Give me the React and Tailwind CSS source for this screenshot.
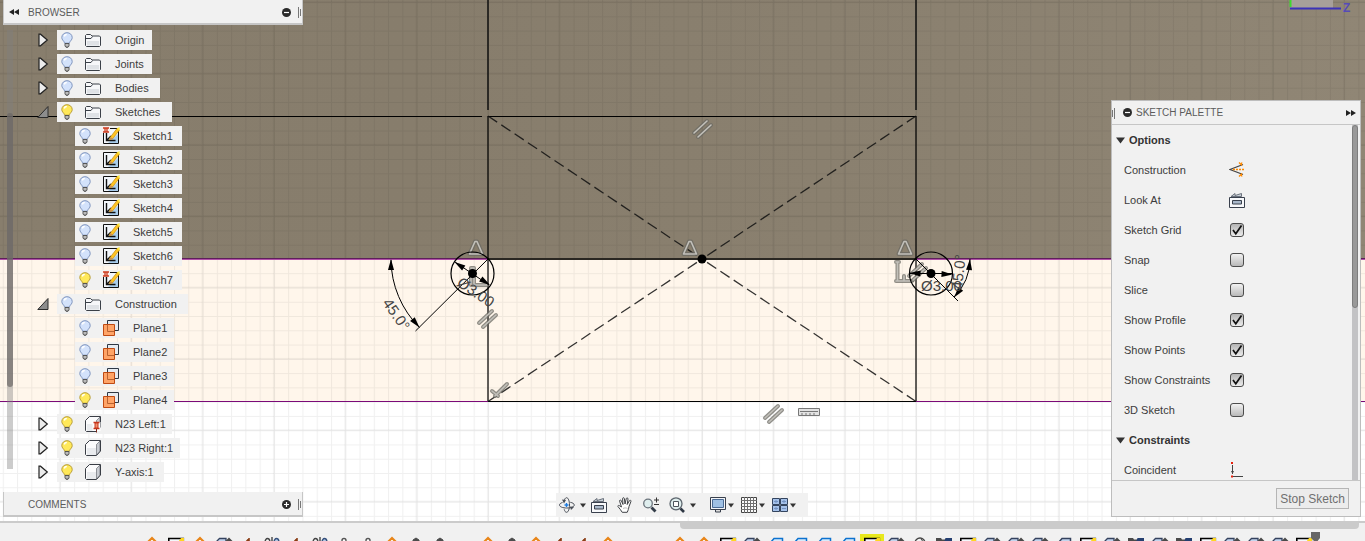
import React from "react";

/* ---------- small icons ---------- */

function Bulb({ on }) {
  return (
    <svg width="12" height="16" viewBox="0 0 12 16" className="shrink-0" aria-hidden="true">
      <path
        d="M6 .7C3.100.7.8 2.800.8 5.500c0 2 1.400 3 2.200 4.200.3.6.5 1 .5 1.500h5c0-.5.2-.9.5-1.500.8-1.200 2.200-2.200 2.200-4.200C11.200 2.800 8.900.7 6 .7z"
        fill={on ? "#ffe95a" : "#d3e2fb"}
        stroke={on ? "#b89c35" : "#7d93bd"}
      />
      <path d="M3.300 4.500c.3-1.200 1.300-1.900 2.500-1.900" fill="none" stroke="#fff" strokeWidth="1.500" />
      <path d="M4 11.500h4v2.500l-1 1.300H5L4 14z" fill="#9a9a9a" stroke="#4d4d4d" strokeWidth=".9" />
      <path d="M4.500 13h3" stroke="#eee" strokeWidth=".8" />
    </svg>
  );
}

function Folder() {
  return (
    <svg width="16" height="16" viewBox="0 0 16 16" className="shrink-0" aria-hidden="true">
      <path d="M.5 13.500v-10l1-1h4l1.500 1.500h7.500l1 1v8.500l-1 1h-13z" fill="#f6f7f9" stroke="#3b4048" />
      <path d="M.5 6.500h5.500l1.500-2" fill="none" stroke="#3b4048" />
      <path d="M2 9h12v4.500H2z" fill="#dfe2e6" />
    </svg>
  );
}

function SketchIcon({ pinned }) {
  return (
    <svg width="18" height="18" viewBox="0 0 18 18" className="shrink-0" aria-hidden="true">
      <path d="M1.500 1.500h15v15h-15z" fill="#f3f7fb" stroke="#111" />
      <path d="M6 16h10V7z" fill="#a9cdec" />
      <path d="M4.500 4v9.500h9M4.500 13.500l4.500-4.500" fill="none" stroke="#111" strokeWidth="1.400" />
      <path d="M8 10.500 15 1.500 17.500 3 10.500 12l-3 .8z" fill="#ffc524" stroke="#b67d00" strokeWidth=".6" />
      <path d="M14.800 1.500 17.500 0v4z" fill="#ffe83b" />
      <path d="m8.500 10 2.300 1.800-3.300 1z" fill="#c98d5a" />
      {pinned && (
        <g>
          <path d="M0 0h8v6H0z" fill="#fbeeea" />
          <path d="M1 1h6M1 5h6M3 1.500v3M5 1.500v3" stroke="#cc3b1e" strokeWidth="1.300" />
        </g>
      )}
    </svg>
  );
}

function PlaneIcon() {
  return (
    <svg width="18" height="18" viewBox="0 0 18 18" className="shrink-0" aria-hidden="true">
      <path d="M5.500 1.500h11v10h-11z" fill="#e6ebf1" stroke="#2f3844" />
      <path d="M1.500 5.500h11v11h-11z" fill="#ffa467" stroke="#bf4a12" />
      <path d="M5.500 6v6.500h6.500" fill="none" stroke="#b96230" />
    </svg>
  );
}

function BodyIcon({ pinned }) {
  return (
    <svg width="18" height="18" viewBox="0 0 18 18" className="shrink-0" aria-hidden="true">
      <path d="m1.500 5.500 4-4h11v10.500l-4 4.500h-10l-1-1z" fill="#fbfbfc" stroke="#3a3e46" />
      <path d="m12.500 5.500 3.500-3.500V12l-3.500 4z" fill="#c9ccd2" stroke="#3a3e46" strokeWidth=".5" />
      <path d="M3 9h9v7H3z" fill="#e9ebee" />
      {pinned && (
        <g>
          <path d="M8.500 7h8v9h-8z" fill="#fff" />
          <path d="M9.500 7.500h6M9.500 13.500h6" stroke="#c5351c" strokeWidth="1.400" />
          <path d="M11 8h3v5h-3z" fill="#f0906f" stroke="#c5351c" />
          <path d="M12.500 14v3.500" stroke="#7c2a1a" />
        </g>
      )}
    </svg>
  );
}

function Twisty({ open }) {
  return (
    <svg width="12" height="14" viewBox="0 0 12 14" aria-hidden="true">
      {open ? (
        <path d="M11 1.500V12.500H.8z" fill="#8d8d8d" stroke="#2c2c2c" />
      ) : (
        <path d="M2 1.200h1.500l6.800 5.800-6.800 5.800H2z" fill="#ececec" stroke="#222" strokeWidth="1.200" />
      )}
    </svg>
  );
}

function DoubleChevron({ right }) {
  return (
    <svg width="12" height="8" viewBox="0 0 12 8" aria-hidden="true">
      <path d={right ? "M1 1v6l5-3zM6 1v6l5-3z" : "M6 1v6L1 4zM11 1v6L6 4z"} fill="#222" />
    </svg>
  );
}

function RoundSign({ plus }) {
  return (
    <svg width="9" height="9" viewBox="0 0 9 9" aria-hidden="true">
      <circle cx="4.500" cy="4.500" r="4.500" fill="#2b2b2b" />
      <path d={plus ? "M2 4.500h5M4.500 2v5" : "M2 4.500h5"} stroke="#fff" strokeWidth="1.200" />
    </svg>
  );
}

function Grip({ flip }) {
  return (
    <svg width="4" height="12" viewBox="0 0 4 12" aria-hidden="true">
      <path d={flip ? "M.5 3v7M2.500 1v11" : "M.5 1v11M2.500 3v7"} stroke="#777" />
    </svg>
  );
}

function LookAtIcon() {
  return (
    <svg width="16" height="16" viewBox="0 0 16 16" aria-hidden="true">
      <path d="M.5 5.500h15v10H.5z" fill="#f8f9fb" stroke="#39404d" />
      <path d="M3.500 8.500h9v3.500h-9z" fill="#a9b8ca" stroke="#39404d" />
      <path d="M2 4.500 6 1.500V3.500L12.500 1.500V4.500z" fill="#c9d0d8" stroke="#5d6570" strokeWidth=".9" />
    </svg>
  );
}

function ConstructionIcon() {
  return (
    <svg width="16" height="16" viewBox="0 0 16 16" aria-hidden="true">
      <path d="M14 2.500 1 7.500l13 5" fill="none" stroke="#444" strokeWidth="1.300" />
      <path d="M4 7.500h12" stroke="#ff8a00" strokeWidth="1.400" strokeDasharray="2 1" />
      <path d="m10 .5 3 3M13 .5l-1 2M10 14.500l3-3M13 14.500l-1-2" fill="none" stroke="#ff8a00" strokeWidth="1.300" />
    </svg>
  );
}

function CoincidentIcon() {
  return (
    <svg width="16" height="16" viewBox="0 0 16 16" aria-hidden="true">
      <path d="M3.500 3v9M3 14.500h11" stroke="#444" />
      <path d="m2 9 1.500 3L5 9z" fill="#444" />
      <path d="M2 0h2v2H2zM2 13.500h2v2H2z" fill="#e8200c" />
    </svg>
  );
}

function OrbitIcon() {
  return (
    <svg width="16" height="16" viewBox="0 0 16 16" aria-hidden="true">
      <g fill="none" stroke="#4a4f58">
        <path d="M5 4.500C5.500 2 6.500.7 7.500.7c1.800 0 3 3.300 3 7.300s-1.200 7.300-3 7.300c-1 0-1.800-1-2.300-3" />
        <path d="M3.500 5.500C1.700 6 .5 6.900.5 8c0 1.800 3.300 3 7.300 3s7.500-1.200 7.500-3c0-1.200-1.700-2.300-4-2.700" />
      </g>
      <path d="M3 2.500 7 3 5 6.500zM11 9.500l4 .5-3 3z" fill="#4a4f58" />
      <path d="M5.500 8h4M7.500 6v4" stroke="#1c7be0" strokeWidth="1.400" />
    </svg>
  );
}

function HandIcon() {
  return (
    <svg width="16" height="16" viewBox="0 0 16 16" aria-hidden="true">
      <path
        d="M5.200 15.300C4 13 2.500 11.500 1 9.600c-.6-.9.600-1.600 1.500-.9L4.500 10 2.600 4.200c-.3-1.300 1.200-1.600 1.700-.5L6 7.500 5.600 1.700C5.600.4 7.200.4 7.400 1.600L8 7 9.300 1.600c.3-1.200 1.900-.8 1.700.5L10.200 7.500l2.200-3.800c.7-1 2-.3 1.500.9L12 9.500c-.4 2.500-.9 3.800-1.800 5.800z"
        fill="#fff"
        stroke="#3f4246"
      />
      <path d="M6 11.500c1.500-.8 3-.8 4.500 0" fill="none" stroke="#bbb" />
    </svg>
  );
}

function ZoomIcon() {
  return (
    <svg width="16" height="16" viewBox="0 0 16 16" aria-hidden="true">
      <circle cx="5" cy="6.500" r="4.300" fill="#dfeeee" stroke="#6b747c" strokeWidth="1.300" />
      <path d="m8.500 10.500 4 4" stroke="#333c48" strokeWidth="2.800" />
      <path d="M11 3h5M13.500.5v5M11 7.500h5" stroke="#333" />
    </svg>
  );
}

function FitIcon() {
  return (
    <svg width="16" height="16" viewBox="0 0 16 16" aria-hidden="true">
      <circle cx="7" cy="6.800" r="6" fill="#dfeeee" stroke="#5d666e" strokeWidth="1.300" />
      <path d="M4.500 4.500h5v5h-5z" fill="#fff" stroke="#4d555d" />
      <path d="m11.500 11.500 3.500 3.500" stroke="#2e3744" strokeWidth="2.600" />
    </svg>
  );
}

function MonitorIcon() {
  return (
    <svg width="16" height="16" viewBox="0 0 16 16" aria-hidden="true">
      <path d="M.5.5h15v12H.5z" fill="#f3f5f8" stroke="#39404d" />
      <path d="M2.500 2.500h11v8h-11z" fill="#9fc0e4" stroke="#4a6a94" />
      <path d="M5.500 13v2h5v-2" fill="#ddd" stroke="#39404d" />
    </svg>
  );
}

function GridIcon() {
  return (
    <svg width="16" height="16" viewBox="0 0 16 16" aria-hidden="true">
      <path d="M.5.5h15v15H.5z" fill="#fafafa" stroke="#444" />
      <path d="M3.500 0v16M6.500 0v16M9.500 0v16M12.500 0v16M0 3.500h16M0 6.500h16M0 9.500h16M0 12.500h16" stroke="#6e6e6e" />
    </svg>
  );
}

function ViewsIcon() {
  return (
    <svg width="16" height="14" viewBox="0 0 16 14" aria-hidden="true">
      <path d="M.5.500h7v6h-7zM8.500.500h7v6h-7zM.5 7.500h7v6h-7zM8.500 7.500h7v6h-7z" fill="#a6c2ea" stroke="#34455f" />
      <path d="M2 3.500h4M4 2v3M10 3.500h4M12 2v3M2 10.500h4M4 9v3M10 10.500h4" stroke="#7392c2" />
    </svg>
  );
}

function Caret() {
  return (
    <svg width="6" height="5" viewBox="0 0 6 5" aria-hidden="true">
      <path d="M0 .5h6L3 4.500z" fill="#333" />
    </svg>
  );
}

/* ---------- drawing canvas ---------- */

function ArrowHead({ x, y, angle }) {
  return <path d="M0 0-11-3-11 3z" fill="#000" transform={`translate(${x} ${y}) rotate(${angle})`} />;
}

function Glyph({ d, x, y }) {
  return (
    <g transform={`translate(${x} ${y})`} fill="none" strokeLinecap="round" strokeLinejoin="round">
      <path d={d} stroke="#6b6963" strokeWidth="4" opacity=".75" />
      <path d={d} stroke="#c2c0ba" strokeWidth="1.600" />
    </g>
  );
}

const TRIANGLE = "M.5 14 6 1.500h2L13.500 14z";
const PARALLEL = "M0 12 13 0M4 16 17 4";

function Canvas() {
  return (
    <svg
      className="absolute inset-0 h-full w-full"
      viewBox="0 0 1365 521"
      preserveAspectRatio="xMidYMid slice"
      role="img"
      aria-label="Sketch canvas"
    >
      <defs>
        <pattern id="minor" width="14.270" height="14.270" patternUnits="userSpaceOnUse" x="702" y="287.500">
          <path d="M0 0H14.270M0 0V14.270" stroke="#000" strokeOpacity=".06" strokeWidth="2" />
        </pattern>
        <pattern id="major" width="71.350" height="71.350" patternUnits="userSpaceOnUse" x="666.300" y="251.900">
          <path d="M0 35.600H71.350M35.600 0V71.350" stroke="#000" strokeOpacity=".06" strokeWidth="1.200" />
        </pattern>
        <linearGradient id="solid" x1="0" y1="0" x2="1" y2="0">
          <stop offset="0" stopColor="#887e6d" />
          <stop offset=".3" stopColor="#877d6c" />
          <stop offset=".7" stopColor="#8b8170" />
          <stop offset="1" stopColor="#908675" />
        </linearGradient>
      </defs>
      <rect width="1365" height="521" fill="#fff" />
      <rect width="1365" height="259" fill="url(#solid)" />
      <rect y="259" width="1365" height="143" fill="#fff6eb" />
      <rect width="1365" height="521" fill="url(#minor)" />
      <rect width="1365" height="521" fill="url(#major)" />

      <path d="M0 259H488M916 259H1365" stroke="#b04fa8" strokeWidth="2" />
      <path d="M0 258.500H488M916 258.500H1365" stroke="#5e1f5b" />
      <path d="M488 259H916" stroke="#2a2722" strokeWidth="2" />
      <path d="M0 401.500H488M916 401.500H1365" stroke="#7a0a78" />
      <path d="M488 401.500H916M0 116.500H482M488 116.500H916" stroke="#000" strokeWidth="1.200" />
      <path d="M488 0V110M916 0V110" stroke="#111" strokeWidth="1.500" />
      <path d="M488 116V401M916 116V401" stroke="#000" strokeOpacity=".6" strokeWidth="2" />
      <path d="M488 116 702 259M916 116 702 259M488 401.500 702 259M916 401.500 702 259" stroke="#111" strokeOpacity=".85" strokeWidth="1.300" strokeDasharray="11 5" />

      <Glyph d={PARALLEL} x={694} y={121} />
      <Glyph d={PARALLEL} x={479} y={311} />
      <Glyph d={PARALLEL} x={765} y={406} />
      <Glyph d={TRIANGLE} x={469} y={240} />
      <Glyph d={TRIANGLE} x={683} y={240} />
      <Glyph d={TRIANGLE} x={898} y={240} />
      <Glyph d="M0 0H3V17M0 0V17H16" x={471} y={268} />
      <Glyph d="M0 0H3M1.500 0V19M0 19H16M8 14V18" x={896} y={262} />
      <Glyph d={PARALLEL} x={909} y={264} />
      <Glyph d="M0 7 6 12M3 12 15 0" x={492} y={384} />
      <g>
        <path d="M798.500 408.500h21v7h-21z" fill="#e2e2e2" stroke="#777" />
        <path d="M800 411.500h18M802 413v3M806 413v3M810 413v3M814 413v3" stroke="#777" />
      </g>

      <g fill="none" stroke="#000">
        <circle cx="472.500" cy="273.500" r="21.500" strokeWidth="1.200" />
        <circle cx="931" cy="273.500" r="21.500" strokeWidth="1.200" />
        <path d="M488 259 415.500 331M391 260A97 97 0 0 0 419.500 327.500M455 262 489 285" />
        <path d="M916 259 958 301M970 259A54 54 0 0 1 954 297M909 273.500H953" />
      </g>
      <circle cx="702" cy="259" r="4.500" />
      <circle cx="472.500" cy="273.500" r="4.500" />
      <circle cx="931" cy="273.500" r="4.500" />
      <ArrowHead x={391} y={259} angle={-90} />
      <ArrowHead x={419.500} y={327.500} angle={50} />
      <ArrowHead x={454.500} y={262} angle={213} />
      <ArrowHead x={490} y={285} angle={33} />
      <ArrowHead x={909.500} y={273} angle={183} />
      <ArrowHead x={952.500} y={274.500} angle={3} />
      <ArrowHead x={970} y={259} angle={-85} />
      <ArrowHead x={954} y={297.500} angle={128} />

      <g fontFamily='"Liberation Sans", Arial, sans-serif' fontSize="15" fill="#444">
        <text transform="translate(382 303) rotate(55)">45.0°</text>
        <text transform="translate(456 285) rotate(34)">Ø3.00</text>
        <text x="921" y="291">Ø3.00</text>
        <text transform="translate(962 290) rotate(-84)">45.0°</text>
      </g>

      <rect x="1290" width="43" height="8" fill="#a7a09a" />
      <path d="M1290.500 0V7" stroke="#3edb2f" strokeWidth="2" />
      <path d="M1290 8.500H1341" stroke="#3c33b8" strokeWidth="2" />
      <text x="1343" y="12" fontFamily='"Liberation Sans", sans-serif' fontSize="12" fontWeight="700" fill="#564bb8">Z</text>
    </svg>
  );
}

/* ---------- browser tree ---------- */

const ICONS = {
  folder: <Folder />,
  sketch: <SketchIcon />,
  sketchPinned: <SketchIcon pinned />,
  plane: <PlaneIcon />,
  body: <BodyIcon />,
  bodyPinned: <BodyIcon pinned />,
};

const TREE = [
  { label: "Origin", icon: "folder", w: "w-[37px]" },
  { label: "Joints", icon: "folder", w: "w-[37px]" },
  { label: "Bodies", icon: "folder", w: "w-[45px]" },
  { label: "Sketches", icon: "folder", open: true, on: true, w: "w-[57px]" },
  { label: "Sketch1", icon: "sketchPinned", child: true, w: "w-[49px]" },
  { label: "Sketch2", icon: "sketch", child: true, w: "w-[49px]" },
  { label: "Sketch3", icon: "sketch", child: true, w: "w-[49px]" },
  { label: "Sketch4", icon: "sketch", child: true, w: "w-[49px]" },
  { label: "Sketch5", icon: "sketch", child: true, w: "w-[49px]" },
  { label: "Sketch6", icon: "sketch", child: true, w: "w-[49px]" },
  { label: "Sketch7", icon: "sketchPinned", child: true, on: true, w: "w-[49px]" },
  { label: "Construction", icon: "folder", open: true, w: "w-[73px]" },
  { label: "Plane1", icon: "plane", child: true, w: "w-[41px]" },
  { label: "Plane2", icon: "plane", child: true, w: "w-[41px]" },
  { label: "Plane3", icon: "plane", child: true, w: "w-[41px]" },
  { label: "Plane4", icon: "plane", child: true, on: true, w: "w-[41px]" },
  { label: "N23 Left:1", icon: "bodyPinned", on: true, w: "w-[57px]" },
  { label: "N23 Right:1", icon: "body", on: true, w: "w-[65px]" },
  { label: "Y-axis:1", icon: "body", on: true, w: "w-[49px]" },
];

function TreeRow({ row }) {
  return (
    <li className="flex h-5 items-center">
      <span className={row.child ? "w-[38px]" : "w-5"}>
        {!row.child && (
          <button type="button" aria-label={`Toggle ${row.label}`} className="block">
            <Twisty open={row.open} />
          </button>
        )}
      </span>
      <div className="flex h-5 items-center bg-[#f1f1f1]">
        <button type="button" aria-label={`Visibility of ${row.label}`} className="flex w-[22px] justify-center pr-[2px]">
          <Bulb on={row.on} />
        </button>
        <span className="flex w-9 justify-center pr-2">{ICONS[row.icon]}</span>
        <span className={`whitespace-nowrap text-[11px] leading-5 text-[#3c3c3c] ${row.w}`}>{row.label}</span>
      </div>
    </li>
  );
}

function LeftPanels() {
  return (
    <aside className="flex w-[300px] flex-col">
      <header className="flex h-[25px] items-center border-x border-b-2 border-[#c6c6c6] bg-[#f1f1f1] pl-1 pt-px">
        <button type="button" aria-label="Collapse browser" className="w-5">
          <DoubleChevron />
        </button>
        <h2 className="flex-1 text-[10px] text-[#5c5c5c]">BROWSER</h2>
        <button type="button" aria-label="Minimize browser" className="mr-[7px]">
          <RoundSign />
        </button>
        <Grip />
      </header>
      <div className="flex flex-1 pl-1 pt-[5px]">
        <div className="mb-[23px] w-[6px] bg-[#808080]/40 pt-[83px]">
          <div className="h-[274px] rounded-full bg-[#6b6765]/70" />
        </div>
        <ul className="flex flex-col gap-1 pl-6">
          {TREE.map((row) => (
            <TreeRow key={row.label} row={row} />
          ))}
        </ul>
      </div>
      <section className="flex h-[25px] items-center border-x border-b-2 border-[#c6c6c6] bg-[#f1f1f1] pl-6 pt-px">
        <h2 className="flex-1 text-[10px] text-[#5c5c5c]">COMMENTS</h2>
        <button type="button" aria-label="Add comment" className="mr-[7px]">
          <RoundSign plus />
        </button>
        <Grip />
      </section>
    </aside>
  );
}

/* ---------- view toolbar ---------- */

function ToolButton({ label, children }) {
  return (
    <button type="button" aria-label={label} className="flex items-center">
      {children}
    </button>
  );
}

function ViewToolbar() {
  return (
    <nav aria-label="View" className="flex h-6 items-center gap-[14px] self-end bg-[#f1f1f1] pl-[3px] pr-3">
      <div className="flex items-center gap-[5px]">
        <ToolButton label="Orbit"><OrbitIcon /></ToolButton>
        <ToolButton label="Orbit options"><Caret /></ToolButton>
        <div className="flex items-center gap-[10px]">
          <ToolButton label="Look at"><LookAtIcon /></ToolButton>
          <ToolButton label="Pan"><HandIcon /></ToolButton>
          <ToolButton label="Zoom"><ZoomIcon /></ToolButton>
          <ToolButton label="Fit"><FitIcon /></ToolButton>
        </div>
        <ToolButton label="Fit options"><Caret /></ToolButton>
      </div>
      <div className="flex items-center gap-[7px]">
        <button type="button" aria-label="Display settings" className="flex items-center gap-[2px]">
          <MonitorIcon /><Caret />
        </button>
        <button type="button" aria-label="Grid and snaps" className="flex items-center gap-[2px]">
          <GridIcon /><Caret />
        </button>
        <button type="button" aria-label="Viewports" className="flex items-center gap-[2px]">
          <ViewsIcon /><Caret />
        </button>
      </div>
    </nav>
  );
}

/* ---------- sketch palette ---------- */

const OPTIONS = [
  { label: "Sketch Grid", checked: true },
  { label: "Snap", checked: false },
  { label: "Slice", checked: false },
  { label: "Show Profile", checked: true },
  { label: "Show Points", checked: true },
  { label: "Show Constraints", checked: true },
  { label: "3D Sketch", checked: false },
];

function SectionTitle({ children }) {
  return (
    <h3 className="h-[30px] shrink-0">
      <button type="button" aria-expanded="true" className="flex h-full items-center gap-1 pl-1 text-[11px] font-bold text-[#333]">
        <svg width="9" height="7" viewBox="0 0 9 7" aria-hidden="true">
          <path d="M0 .5h9L4.500 6.500z" fill="#333" />
        </svg>
        {children}
      </button>
    </h3>
  );
}

function ActionRow({ label, children }) {
  return (
    <button type="button" className="flex h-[30px] shrink-0 items-center pl-3 text-left text-[11px] text-[#3c3c3c]">
      <span className="w-[105px]">{label}</span>
      {children}
    </button>
  );
}

function CheckRow({ label, checked }) {
  return (
    <label className="flex h-[30px] shrink-0 items-center pl-3 text-[11px] text-[#3c3c3c]">
      <span className="w-[106px]">{label}</span>
      <span className="grid">
        <input
          type="checkbox"
          defaultChecked={checked}
          className="peer col-start-1 row-start-1 size-[14px] appearance-none rounded-[3px] border border-[#4c4c4c] bg-linear-to-b from-[#f2f2f2] to-[#b9b9b9] checked:from-[#b4b4b4] checked:to-[#ececec]"
        />
        <svg width="14" height="14" viewBox="0 0 14 14" className="pointer-events-none invisible col-start-1 row-start-1 peer-checked:visible" aria-hidden="true">
          <path d="m3 7 2.800 3.800L11.500 2.500" fill="none" stroke="#111" strokeWidth="1.700" />
        </svg>
      </span>
    </label>
  );
}

function SketchPalette() {
  return (
    <aside className="mt-[100px] flex w-[250px] flex-col justify-self-end border border-[#bdbdbd] bg-[#f1f1f1]">
      <header className="flex h-6 shrink-0 items-center border-b border-[#c6c6c6] pr-[3px]">
        <Grip flip />
        <button type="button" aria-label="Minimize palette" className="ml-[7px] mr-1">
          <RoundSign />
        </button>
        <h2 className="flex-1 text-[10px] text-[#5c5c5c]">SKETCH PALETTE</h2>
        <button type="button" aria-label="Collapse palette">
          <DoubleChevron right />
        </button>
      </header>
      <div className="flex h-0 flex-1 overflow-hidden pr-[2px]">
        <div className="flex flex-1 flex-col">
          <SectionTitle>Options</SectionTitle>
          <ActionRow label="Construction"><ConstructionIcon /></ActionRow>
          <ActionRow label="Look At"><LookAtIcon /></ActionRow>
          {OPTIONS.map((option) => (
            <CheckRow key={option.label} {...option} />
          ))}
          <SectionTitle>Constraints</SectionTitle>
          <ActionRow label="Coincident"><CoincidentIcon /></ActionRow>
        </div>
        <div className="w-[6px] bg-[#c3c3c5]">
          <div className="h-[183px] rounded-full border border-[#7d7d7d] bg-[#999]" />
        </div>
      </div>
      <footer className="flex h-9 shrink-0 items-center justify-end border-t border-[#c6c6c6] pr-[11px]">
        <button type="button" className="h-[21px] border border-[#b5b5b5] bg-[#ececec] px-[3px] text-xs leading-none text-[#707070]">
          Stop Sketch
        </button>
      </footer>
    </aside>
  );
}

/* ---------- timeline ---------- */

const FEATURES = {
  o: <path d="m4 8 4-4 4 4-4 4z" fill="#fff" stroke="#e8861a" strokeWidth="2.200" />,
  s: (
    <g>
      <path d="M.8 4.500h14.500v11H.8z" fill="#f3f7fb" stroke="#000" strokeWidth="1.600" />
      <path d="m8 11 5-7h3v3l-6 6z" fill="#ffd61f" />
    </g>
  ),
  e: (
    <g>
      <path d="m0 8 3.500-3.500H10V12H0z" fill="#c3d5ee" stroke="#34425e" strokeWidth="1.300" />
      <path d="m13 3.500 3.500 3.500h-2v5h-3V7h-2z" fill="#4a4a4a" />
    </g>
  ),
  t: <path d="M9 4v9M9 4.500 6 8" stroke="#8a3d16" strokeWidth="1.600" />,
  j: (
    <g fill="none" stroke="#444" strokeWidth="1.400">
      <path d="M1 9c0-6 5-6 5 0M8 3v10" />
      <path d="M10 9c0-6 5-6 5 0" stroke="#35507c" fill="#b8cbe6" />
    </g>
  ),
  c: <circle cx="8" cy="6.500" r="2" fill="#fff" stroke="#555" strokeWidth="1.400" />,
  d: <path d="m8 4 3 2v8H5V6z" fill="#4c4c4c" stroke="#4c4c4c" />,
  b: <path d="m3 8 3-3.500h8.500V12H3z" fill="#d7ebfb" stroke="#0c72cf" strokeWidth="1.500" />,
  k: <path d="m3 8 3-3.500h8.500V12H3z" fill="#c3d5ee" stroke="#34425e" strokeWidth="1.500" />,
  h: (
    <g>
      <circle cx="8" cy="9" r="5" fill="#f1f1f1" stroke="#444" strokeWidth="1.300" />
      <path d="m9 5 4 5" stroke="#444" />
    </g>
  ),
  m: (
    <g>
      <path d="M0 4h5l1 1.500h4V9H0z" fill="#4a4a4a" />
      <path d="M9.500 4H16v7H8.500V6.500z" fill="#253f70" />
    </g>
  ),
};

const TIMELINE = "osoetjtjccodd_odotto__oosebbbbsehmseeeksememseees";
const ACTIVE_FEATURE = 30;

function Timeline() {
  return (
    <footer className="flex h-5 shrink-0 flex-col overflow-hidden border-t-2 border-[#cbcbcb] bg-[#f1f1f1]">
      <div className="flex h-[6px] shrink-0 justify-end pr-[6px]">
        <div className="w-1/2 rounded-b-sm bg-[#cbcbcb]" />
      </div>
      <ol className="flex shrink-0 pl-[140px] pt-[5px]">
        {TIMELINE.split("").map((kind, i) => (
          <li key={i} className={`flex w-6 shrink-0 justify-center ${i === ACTIVE_FEATURE ? "bg-[#e8e81c]" : ""}`}>
            <svg width="17" height="16" viewBox="0 0 17 16" aria-hidden="true">
              {FEATURES[kind]}
            </svg>
          </li>
        ))}
        <li className="-ml-[5px]">
          <svg width="9" height="14" viewBox="0 0 9 14" className="-mt-[2px]" aria-hidden="true">
            <path d="M0 0h9v6L5 11 0 6z" fill="#666" />
          </svg>
        </li>
      </ol>
    </footer>
  );
}

export default function App() {
  return (
    <main className="flex h-screen flex-col overflow-hidden bg-white font-['Liberation_Sans',Arial,sans-serif]">
      <div className="relative min-h-0 flex-1">
        <Canvas />
        <div className="relative grid h-full grid-cols-[1fr_auto_1fr] grid-rows-[minmax(0,1fr)] pb-1 pl-[3px] pr-1">
          <LeftPanels />
          <ViewToolbar />
          <SketchPalette />
        </div>
      </div>
      <Timeline />
    </main>
  );
}
